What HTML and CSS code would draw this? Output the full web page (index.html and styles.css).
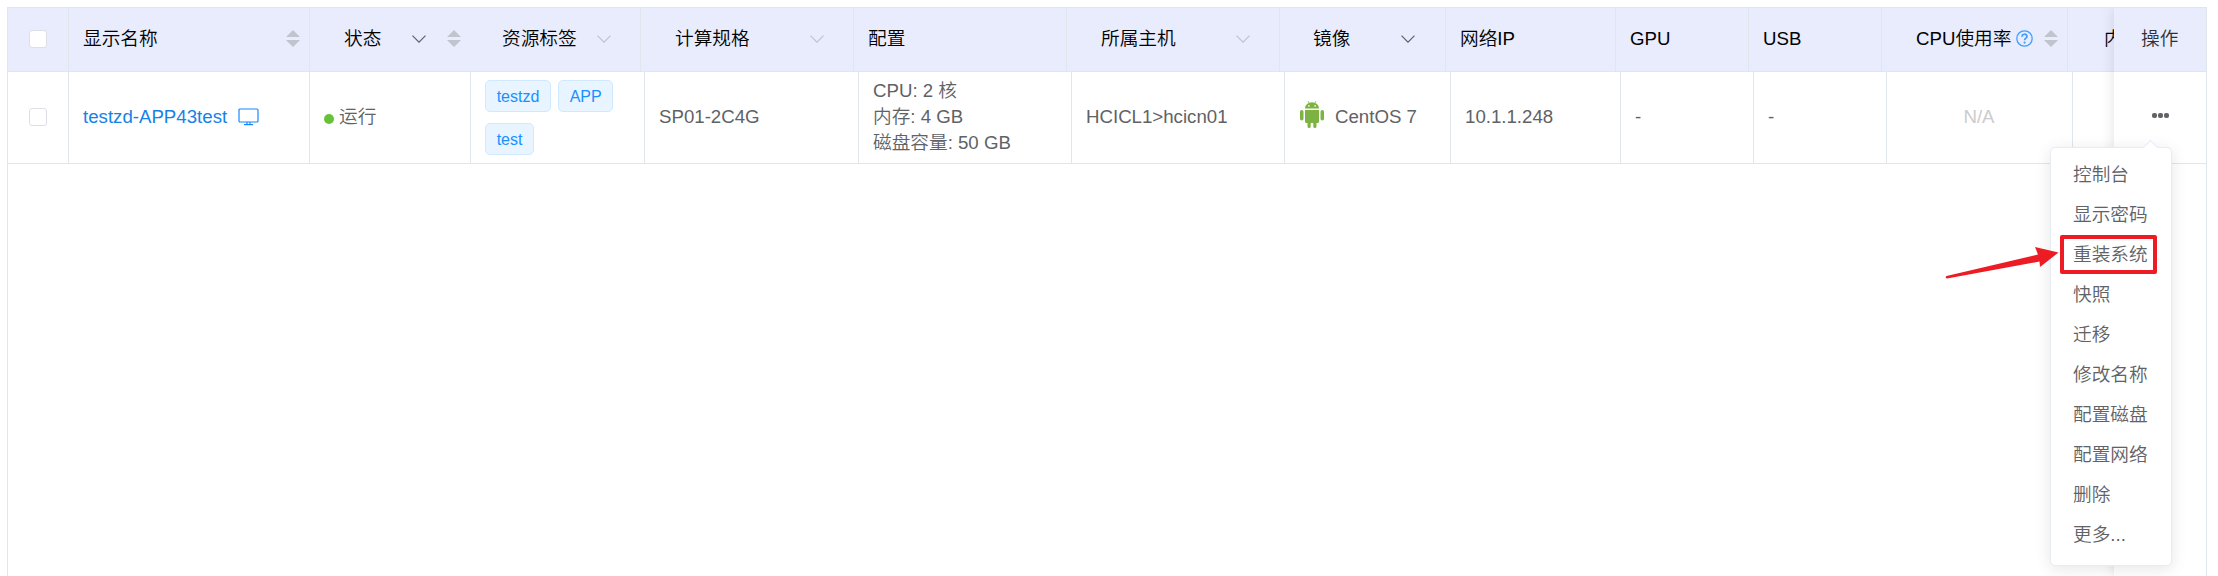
FILE: index.html
```html
<!DOCTYPE html>
<html lang="zh-CN">
<head>
<meta charset="utf-8">
<title>云主机</title>
<link rel="stylesheet" href="styles.css">
</head>
<body>
<svg class="defs" aria-hidden="true">
  <symbol id="chevron" viewBox="0 0 14 8"><path d="M.5 .6 7 7.2 13.5 .6" fill="none" stroke="currentColor" stroke-width="1.2"/></symbol>
  <symbol id="sort" viewBox="0 0 14 17"><path d="M7 0 14 7H0zM0 10H14L7 17z" fill="#c0c4cc"/></symbol>
</svg>
<main class="table">
  <div class="row head">
    <div class="cell check"><span class="box"></span></div>
    <div class="cell name"><span>显示名称</span><svg class="sort"><use href="#sort"/></svg></div>
    <div class="cell state"><span>状态</span><svg class="chev dark"><use href="#chevron"/></svg><svg class="sort"><use href="#sort"/></svg></div>
    <div class="cell tags-col"><span>资源标签</span><svg class="chev"><use href="#chevron"/></svg></div>
    <div class="cell spec"><span>计算规格</span><svg class="chev"><use href="#chevron"/></svg></div>
    <div class="cell conf"><span>配置</span></div>
    <div class="cell host"><span>所属主机</span><svg class="chev"><use href="#chevron"/></svg></div>
    <div class="cell image"><span>镜像</span><svg class="chev dark"><use href="#chevron"/></svg></div>
    <div class="cell ip"><span>网络IP</span></div>
    <div class="cell gpu"><span>GPU</span></div>
    <div class="cell usb"><span>USB</span></div>
    <div class="cell cpu"><span>CPU使用率</span>
      <svg class="help" viewBox="0 0 17 17"><circle cx="8.5" cy="8.5" r="7.7" fill="none" stroke="#409eff" stroke-width="1.3"/><path d="M6 6.700C6 3.400 11 3.500 11 6.400 11 8.200 8.600 8.200 8.600 10.200" fill="none" stroke="#409eff" stroke-width="1.700"/><circle cx="8.600" cy="12.600" r="1.100" fill="#409eff"/></svg>
      <svg class="sort"><use href="#sort"/></svg></div>
    <div class="cell mem"><span>内</span></div>
  </div>
  <div class="row body">
    <div class="cell check"><span class="box"></span></div>
    <div class="cell name"><a>testzd-APP43test</a>
      <svg class="monitor" viewBox="0 0 21 18" fill="none" stroke="#1989fa" stroke-width="1.2"><rect x="1" y="1" width="19" height="13" rx="1"/><path d="M9 14v2.500M12 14v2.500M6 16.600h9"/></svg></div>
    <div class="cell state"><i class="dot"></i><span>运行</span></div>
    <div class="cell tags-col"><span class="tag">testzd</span><span class="tag">APP</span><span class="tag">test</span></div>
    <div class="cell spec">SP01-2C4G</div>
    <div class="cell conf"><div>CPU: 2 核</div><div>内存: 4 GB</div><div>磁盘容量: 50 GB</div></div>
    <div class="cell host">HCICL1&gt;hcicn01</div>
    <div class="cell image">
      <svg class="android" viewBox="0 0 24 27" fill="#7cb342"><path d="M5 7.600C5 4.800 6.800 3 8.800 2.100L7.600.4 8.200 0 9.500 1.800Q12 .9 14.500 1.800L15.800 0 16.400.4 15.200 2.100C17.200 3 19 4.800 19 7.600z"/><rect x="0" y="9" width="3.500" height="10.500" rx="1.750"/><rect x="20.500" y="9" width="3.500" height="10.500" rx="1.750"/><path d="M5 9H19V20.500Q19 22 17.500 22H16.500V25.400Q16.500 27 14.900 27 13.300 27 13.300 25.400V22H10.700V25.400Q10.700 27 9.100 27 7.500 27 7.500 25.400V22H6.500Q5 22 5 20.500z"/><circle cx="8.900" cy="4.900" r=".8" fill="#fff"/><circle cx="15.100" cy="4.900" r=".8" fill="#fff"/></svg>
      <span>CentOS 7</span></div>
    <div class="cell ip">10.1.1.248</div>
    <div class="cell gpu">-</div>
    <div class="cell usb">-</div>
    <div class="cell cpu">N/A</div>
    <div class="cell mem"></div>
  </div>
  <aside class="fixed">
    <div class="fixed-head">操作</div>
    <div class="fixed-body"><i></i><i></i><i></i></div>
  </aside>
</main>
<ul class="menu">
  <li>控制台</li><li>显示密码</li><li class="marked">重装系统</li><li>快照</li><li>迁移</li>
  <li>修改名称</li><li>配置磁盘</li><li>配置网络</li><li>删除</li><li>更多...</li>
</ul>
<svg class="pointer" viewBox="0 0 114 34"><path d="M1.500 30 93 8.500 90 1 113.500 6.500 95 21 94.500 15.500 2 32.500Q-.500 31.500 1.500 30z" fill="#ed1c24"/></svg>
</body>
</html>
```
FILE: styles.css
```css
*, *::before, *::after { box-sizing: border-box; }
body {
  margin: 0;
  height: 576px;
  overflow: hidden;
  position: relative;
  background: #fff;
  color: #606266;
  font: 350 18.667px/26px "Liberation Sans", "Noto Sans CJK SC", sans-serif;
}
.defs { position: absolute; width: 0; height: 0; }
.table {
  position: relative;
  margin: 7px 11px 0 7px;
  height: 569px;
  border: 1px solid #dfe6ec;
  border-bottom: 0;
  overflow: hidden;
}
.row { display: grid; border-bottom: 1px solid #dfe6ec; }
.head {
  height: 64px;
  background: #e8ecfd;
  color: #000;
  grid-template-columns: 61px 241px 161px 170px 213px 213px 213px 166px 170px 133px 133px 186px 138px;
}
.body {
  height: 92px;
  grid-template-columns: 61px 241px 161px 174px 214px 213px 213px 166px 170px 133px 133px 186px 133px;
}
.cell {
  display: flex;
  align-items: center;
  padding: 0 15px 2px 14px;
  border-right: 1px solid #dfe6ec;
  white-space: nowrap;
  overflow: hidden;
}
.head .state { border-right: 0; }
.cell.check { padding: 0 0 1px 21px; }
.box { width: 18px; height: 18px; background: #fff; border: 1px solid #dcdfe6; border-radius: 3px; }
.sort { width: 14px; height: 17px; flex: none; }
.chev { width: 14px; height: 8px; flex: none; color: #c0c4cc; }
.chev.dark { color: #606266; }
.head .name { justify-content: space-between; padding-right: 9px; }
.head .state { padding-left: 34px; }
.head .state .chev { margin-left: 31px; }
.head .state .sort { margin-left: 21px; }
.head .tags-col { padding-left: 31px; }
.head .tags-col .chev { margin-left: 20px; }
.head .spec { padding-left: 34px; }
.head .spec .chev { margin-left: 60px; }
.head .host { padding-left: 34px; }
.head .host .chev { margin-left: 60px; }
.head .image { padding-left: 33px; }
.head .image .chev { margin-left: 51px; }
.head .cpu { padding-left: 34px; padding-right: 0; }
.help { width: 17px; height: 17px; margin-left: 5px; flex: none; }
.head .cpu .sort { margin-left: 11px; }
.head .mem { padding-left: 36px; }
.body .name { color: #1682e6; }
.monitor { width: 21px; height: 18px; margin-left: 11px; }
.dot { width: 10px; height: 10px; margin: 4px 5px 0 0; border-radius: 50%; background: #67c23a; }
.body .tags-col { flex-wrap: wrap; align-content: center; gap: 11px 7px; padding-right: 0; padding-bottom: 0; }
.tag {
  height: 32px;
  padding: 0 10.67px;
  border: 1px solid #d1e9ff;
  border-radius: 5px;
  background: #e8f4ff;
  color: #1890ff;
  font-size: 16px;
  line-height: 31px;
}
.body .conf { flex-direction: column; align-items: flex-start; justify-content: center; }
.body .image { padding-left: 15px; padding-bottom: 1px; }
.android { width: 24px; height: 27px; margin: 0 11px 5px 0; }
.body .cpu { justify-content: center; color: #ccc; }
.fixed {
  position: absolute;
  top: 0;
  right: 0;
  width: 92px;
  height: 100%;
  background: #fff;
  box-shadow: 0 0 13px rgba(0, 0, 0, .12);
}
.fixed-head {
  height: 64px;
  padding-left: 27px;
  border-bottom: 1px solid #dfe6ec;
  background: #e8ecfd;
  color: #303133;
  line-height: 61px;
}
.fixed-body {
  display: flex;
  height: 92px;
  padding: 0 0 4px 38px;
  align-items: center;
  gap: 1px;
  border-bottom: 1px solid #dfe6ec;
}
.fixed-body i { width: 5px; height: 5px; border-radius: 2px; background: #606266; }
.menu {
  position: absolute;
  left: 2050px;
  top: 147px;
  width: 122px;
  height: 419px;
  margin: 0;
  padding: 7px 0;
  list-style: none;
  background: #fff;
  border: 1px solid #e6ebf5;
  border-radius: 5px;
  box-shadow: 0 3px 16px rgba(0, 0, 0, .1);
}
.menu::before {
  content: "";
  position: absolute;
  left: 94px;
  top: -6px;
  width: 11px;
  height: 11px;
  background: #fff;
  border: 1px solid #e6ebf5;
  border-width: 1px 0 0 1px;
  transform: rotate(45deg);
}
.menu li { height: 40px; padding-left: 22px; line-height: 40px; }
.marked { position: relative; }
.marked::after {
  content: "";
  position: absolute;
  left: 9px;
  top: 0;
  width: 97px;
  height: 39px;
  border: 4px solid #ed1c24;
  border-radius: 2px;
}
.pointer { position: absolute; left: 1945px; top: 246px; width: 114px; height: 34px; }
```
